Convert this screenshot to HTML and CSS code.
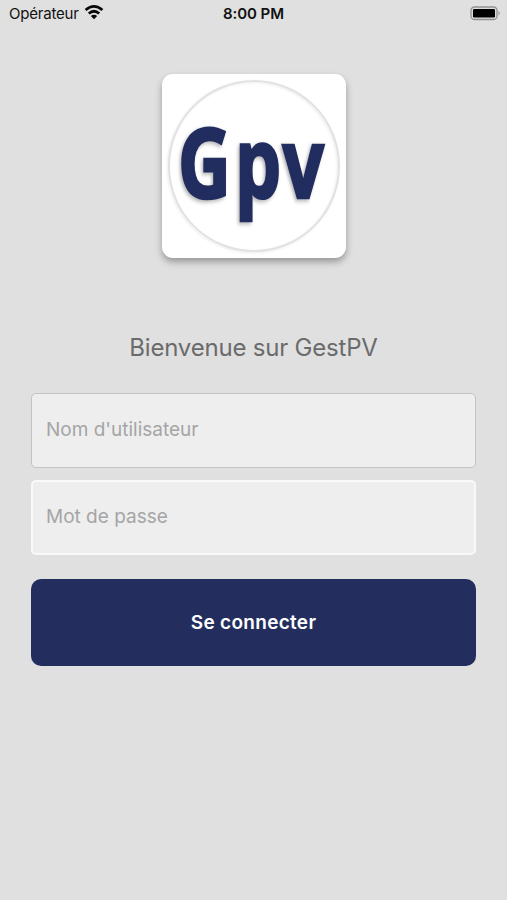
FILE: index.html
```html
<!DOCTYPE html>
<html lang="fr">
<head>
<meta charset="utf-8">
<title>GestPV</title>
<link rel="stylesheet" href="styles.css">
</head>
<body>
<header class="status">
  <div class="carrier"><span>Opérateur</span>
    <svg class="wifi" viewBox="0 0 20 15" width="20" height="15"><g fill="none" stroke="#080808" stroke-width="2.7"><path d="M1.6 5.1Q10-2.2 18.4 5.1"/><path d="M4.8 8.5Q10 4 15.2 8.5"/></g><path d="M6.8 10.9Q10 8.4 13.2 10.9L10 14.2Z" fill="#080808"/></svg>
  </div>
  <div class="time">8:00 PM</div>
  <svg class="battery" viewBox="0 0 31 15" width="31" height="15"><rect x="1" y="1" width="26" height="12.5" rx="3.5" fill="#ddd" stroke="#929292" stroke-width="1.3"/><rect x="3" y="3" width="22" height="8.5" rx="1.2" fill="#000"/><path d="M28.5 5Q31 7.2 28.5 9.5Z" fill="#929292"/></svg>
</header>
<main class="login">
  <div class="logo">
    <svg viewBox="0 0 184 184" width="184" height="184">
      <circle class="ring" cx="92" cy="92" r="85"/>
      <text class="mark" transform="translate(0 124) scale(.76 1)" x="21 96 158.5">Gpv</text>
    </svg>
  </div>
  <h1 class="title">Bienvenue sur GestPV</h1>
  <form class="form">
    <input class="field field-user" type="text" placeholder="Nom d'utilisateur">
    <input class="field field-pass" type="password" placeholder="Mot de passe">
    <button class="submit" type="button">Se connecter</button>
  </form>
</main>
</body>
</html>
```
FILE: styles.css
```css
* { box-sizing: border-box; }
body {
  margin: 0;
  height: 900px;
  overflow: hidden;
  background: #e0e0e0;
  font-family: Inter, "Liberation Sans", sans-serif;
}
.status {
  display: grid;
  grid-template-columns: 1fr auto 1fr;
  align-items: center;
  height: 27px;
  padding: 0 6px 0 9px;
  color: #111;
  font-size: 15px;
}
.carrier { display: flex; align-items: center; gap: 5px; letter-spacing: -0.2px; }
.wifi { margin-top: -2px; }
.time { font-weight: 600; margin-left: -3px; letter-spacing: -0.1px; }
.battery { justify-self: end; }
.login {
  display: flex;
  flex-direction: column;
  align-items: center;
  padding: 47px 31px 0;
}
.logo {
  width: 184px;
  height: 184px;
  border-radius: 11px;
  background: #fff;
  box-shadow: 0 4px 7px rgba(0, 0, 0, .32);
}
.logo svg { display: block; }
.ring {
  fill: none;
  stroke: #e2e2e2;
  stroke-width: 2;
  filter: drop-shadow(-1px 1px 1px rgba(0, 0, 0, .08));
}
.mark {
  font: 700 96px "Open Sans", "Noto Sans", sans-serif;
  fill: #212c5f;
  stroke: #212c5f;
  stroke-width: 2.6;
  filter: drop-shadow(-2px 2px 2px rgba(0, 0, 0, .3));
}
.title {
  margin: 74px 0 29px;
  height: 32px;
  line-height: 32px;
  font-size: 24px;
  font-weight: 400;
  letter-spacing: -0.2px;
  color: #6b6b6b;
}
.form { display: flex; flex-direction: column; width: 100%; }
.field {
  width: 100%;
  height: 75px;
  padding: 0 14px 2px;
  border: 1px solid #c3c3c3;
  border-radius: 5px;
  background: #eee;
  font-family: inherit;
  font-size: 19px;
  outline: 0;
}
.field::placeholder { color: #a5a5a5; opacity: 1; }
.field-pass { margin-top: 12px; border: 2px solid #f9f9f9; padding: 0 13px 2px; }
.submit {
  height: 87px;
  margin-top: 24px;
  padding: 0;
  border: 0;
  border-radius: 10px;
  background: #232e5e;
  color: #fff;
  font: 600 19px Inter, sans-serif;
  letter-spacing: 0.3px;
}
```
